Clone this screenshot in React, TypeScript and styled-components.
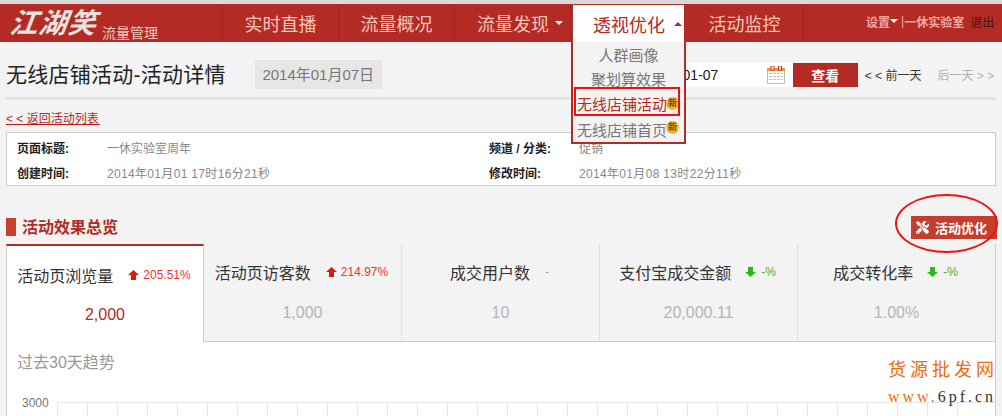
import React from "react";
import styled, { createGlobalStyle } from "styled-components";
import { FaTools } from "react-icons/fa";

const FONT = `"Liberation Sans", "Noto Sans CJK SC", sans-serif`;

const Global = createGlobalStyle`
  html, body { margin: 0; padding: 0; background: #f3f3f3; }
  * { box-sizing: border-box; }
  body { font-family: ${FONT}; }
`;

const Page = styled.div`
  width: 1002px;
  height: 416px;
  overflow: hidden;
  border-top: 4px solid #d9d9d9;
  background: #f3f3f3;
  position: relative;
`;

const Nav = styled.nav`
  display: flex;
  height: 38px;
  background: #b32b24;
`;

const Logo = styled.div`
  width: 223px;
  display: flex;
  align-items: flex-end;
  padding-left: 10px;
  border-right: 1px solid #a02520;
  overflow: hidden;
`;

const LogoMark = styled.span`
  font-size: 28px;
  line-height: 36px;
  font-weight: 700;
  font-style: italic;
  color: #e9e2de;
  letter-spacing: 1px;
  transform: skewX(-8deg);
  display: inline-block;
`;

const LogoSub = styled.span`
  font-size: 14px;
  line-height: 18px;
  color: #eec9c0;
  margin-left: 5px;
  white-space: nowrap;
`;

const NavItem = styled.div<{ $w: number; $active?: boolean; $inset?: number }>`
  position: relative;
  width: ${(p) => p.$w}px;
  height: ${(p) => (p.$active ? 39 : 38)}px;
  margin-top: ${(p) => (p.$active ? -1 : 0)}px;
  padding-left: ${(p) => p.$inset ?? 0}px;
  display: flex;
  align-items: center;
  justify-content: ${(p) => (p.$inset ? "flex-start" : "center")};
  gap: ${(p) => (p.$active ? 9 : 6)}px;
  font-size: 18px;
  color: ${(p) => (p.$active ? "#b32b24" : "#f9c6ba")};
  background: ${(p) => (p.$active ? "#fff" : "transparent")};
  border-right: ${(p) => (p.$active ? "none" : "1px solid #a02520")};
  ${(p) => p.$active && "border: 2px solid #b32b24; border-bottom: none; z-index: 5;"}
`;

const Caret = styled.i<{ $up?: boolean; $color?: string }>`
  width: 0;
  height: 0;
  border-left: 4px solid transparent;
  border-right: 4px solid transparent;
  ${(p) =>
    p.$up
      ? `border-bottom: 4px solid ${p.$color || "#b32b24"};`
      : `border-top: 4px solid ${p.$color || "#fff"};`}
`;

const Menu = styled.div`
  position: absolute;
  left: -2px;
  right: -2px;
  top: 37px;
  height: 102px;
  background: #f3f3f3;
  border: 2px solid #b32b24;
  border-top: none;
  display: flex;
  flex-direction: column;
  align-items: center;
`;

const MenuLink = styled.div`
  height: 24.5px;
  width: 100%;
  display: flex;
  align-items: center;
  justify-content: center;
  font-size: 15px;
  color: #777;
`;

const MenuNew = styled.div<{ $shift: number }>`
  position: relative;
  height: 25px;
  width: 100%;
  margin-top: ${(p) => p.$shift}px;
  padding-left: 4px;
  display: flex;
  align-items: center;
  font-size: 15px;
  color: #777;
`;

const CurrentText = styled.span`
  color: #b32b24;
  border-bottom: 1px solid #b32b24;
  line-height: 18px;
`;

const Highlight = styled.div`
  position: absolute;
  left: 1px;
  top: -6px;
  width: 106px;
  height: 29px;
  border: 2px solid #f01010;
  pointer-events: none;
`;

const Badge = styled.span<{ $top: number }>`
  position: absolute;
  left: 93px;
  top: ${(p) => p.$top}px;
  width: 13px;
  height: 13px;
  border-radius: 50%;
  background: #f2b529;
  color: #7a4a10;
  font-size: 9px;
  line-height: 13px;
  text-align: center;
  font-weight: 700;
`;

const UserBar = styled.div`
  flex: 1;
  display: flex;
  align-items: center;
  padding-left: 62px;
  padding-bottom: 4px;
  font-size: 12px;
  color: #f5a8a0;
  white-space: nowrap;
`;

const UserLink = styled.span`
  font-weight: 700;
`;

const UserSep = styled.span`
  margin: 0 0 0 3px;
`;

const Logout = styled.span`
  color: #3a1a16;
  margin-left: 6px;
`;

const Content = styled.main`
  padding: 0 6px;
`;

const TitleRow = styled.div`
  height: 58px;
  display: flex;
  align-items: center;
  border-bottom: 3px solid #e2e2e2;
  padding-top: 10px;
`;

const Title = styled.h1`
  margin: 0;
  font-size: 21px;
  line-height: 30px;
  font-weight: 400;
  letter-spacing: 0.25px;
  color: #222;
  white-space: nowrap;
`;

const DateChip = styled.div`
  margin-left: 29px;
  width: 127px;
  height: 29px;
  background: #e6e6e6;
  color: #777;
  font-size: 15px;
  line-height: 29px;
  text-align: center;
`;

const DateInput = styled.div`
  margin-left: 260px;
  width: 151px;
  height: 24px;
  background: #fff;
  display: flex;
  align-items: center;
  justify-content: space-between;
  padding: 0 7px 0 5px;
  font-size: 14px;
  color: #222;
`;

const ViewButton = styled.button`
  width: 65px;
  height: 24px;
  border: none;
  padding: 0;
  background: #b32b24;
  color: #fff;
  font: 700 14px ${FONT};
`;

const DayLink = styled.span<{ $muted?: boolean }>`
  font-size: 12px;
  color: ${(p) => (p.$muted ? "#b0b0b0" : "#333")};
  margin-left: ${(p) => (p.$muted ? 16 : 7)}px;
  white-space: nowrap;
`;

const BackLink = styled.a`
  display: block;
  width: 94px;
  margin-top: 12px;
  height: 13px;
  font-size: 12px;
  line-height: 14px;
  color: #b32b24;
  border-bottom: 1px solid #c01616;
  white-space: nowrap;
`;

const InfoBox = styled.section`
  margin-top: 7px;
  width: 990px;
  height: 54px;
  background: #fff;
  border: 1px solid #ccc;
  padding: 2px 0 0 10px;
  display: grid;
  grid-template-columns: 90px 382px 90px 1fr;
  grid-auto-rows: 25px;
  align-items: center;
  font-size: 12px;
`;

const InfoLabel = styled.span`
  color: #222;
  font-weight: 700;
`;

const InfoValue = styled.span<{ $spaced?: boolean }>`
  color: #888;
  letter-spacing: ${(p) => (p.$spaced ? "0.33px" : "0")};
`;

const SectionHead = styled.div`
  position: relative;
  z-index: 3;
  margin-top: 30px;
  height: 23px;
  display: flex;
  align-items: center;
`;

const SectionMark = styled.i`
  width: 10px;
  height: 18px;
  background: #c63f2f;
  margin-right: 6px;
  margin-bottom: 2px;
`;

const SectionTitle = styled.h2`
  margin: 0 0 3px;
  font-size: 16px;
  font-weight: 700;
  color: #b32b24;
`;

const OptimizeButton = styled.button`
  margin-left: auto;
  margin-right: -1px;
  width: 86px;
  height: 23px;
  border: none;
  padding: 0 0 0 5px;
  background: #c43e2e;
  color: #fff;
  font: 700 13px ${FONT};
  display: flex;
  align-items: center;
  gap: 6px;
  white-space: nowrap;
`;

const Ring = styled.div`
  position: absolute;
  left: 889px;
  top: -22px;
  width: 103px;
  height: 59px;
  border: 2px solid #ee1111;
  border-radius: 50%;
  pointer-events: none;
`;

const Panel = styled.section`
  position: relative;
  margin-top: 5px;
  width: 990px;
  height: 172px;
  background: #fff;
  border-left: 1px solid #ccc;
  border-right: 1px solid #ccc;
`;

const TabRow = styled.div`
  display: flex;
  height: 98px;
  margin-left: -1px;
`;

const Tab = styled.div<{ $active?: boolean; $last?: boolean }>`
  width: 198px;
  flex: ${(p) => (p.$last ? 1 : "none")};
  background: ${(p) => (p.$active ? "#fff" : "#f3f3f3")};
  border-top: 2px solid ${(p) => (p.$active ? "#b32b24" : "#f3f3f3")};
  border-bottom: ${(p) => (p.$active ? "none" : "1px solid #ccc")};
  border-left: ${(p) => (p.$active ? "1px solid #ccc" : "none")};
  border-right: ${(p) => (p.$active ? "1px solid #ccc" : p.$last ? "none" : "1px dotted #c8c8c8")};
  padding: ${(p) => (p.$active ? 19 : 16)}px 2px 0 0;
  display: flex;
  flex-direction: column;
  align-items: center;
`;

const TabHead = styled.div`
  display: flex;
  align-items: center;
  height: 20px;
  white-space: nowrap;
`;

const TabLabel = styled.span`
  font-size: 16px;
  color: #333;
`;

const Delta = styled.span<{ $tone: "up" | "down" | "none" }>`
  display: flex;
  align-items: center;
  gap: ${(p) => (p.$tone === "down" ? 5 : 4)}px;
  margin-left: ${(p) => (p.$tone === "down" ? 14 : 15)}px;
  font-size: 12px;
  color: ${(p) => (p.$tone === "up" ? "#ee3333" : p.$tone === "down" ? "#55aa22" : "#aaa")};
`;

const TabValue = styled.div<{ $active?: boolean }>`
  margin-top: ${(p) => (p.$active ? 20 : 21)}px;
  margin-left: 2px;
  font-size: 16px;
  line-height: 20px;
  color: ${(p) => (p.$active ? "#b32b24" : "#b5b5b5")};
`;

const ChartTitle = styled.div`
  padding: 10px 0 0 10px;
  font-size: 16px;
  line-height: 22px;
  color: #999;
`;

const ChartArea = styled.div`
  display: flex;
  margin-top: 28px;
  height: 20px;
`;

const AxisLabel = styled.span`
  width: 50px;
  padding-left: 15px;
  margin-top: -6px;
  font-size: 12px;
  line-height: 14px;
  color: #777;
`;

const Watermark = styled.div`
  position: absolute;
  left: 881px;
  top: 114px;
  width: 108px;
  color: #ef6a10;
  white-space: nowrap;
`;

const WatermarkTitle = styled.div`
  font-size: 18px;
  line-height: 24px;
  letter-spacing: 4px;
`;

const WatermarkUrl = styled.div`
  font-size: 16px;
  line-height: 20px;
  margin-top: 5px;
  letter-spacing: 3px;
  font-family: "Liberation Serif", serif;
`;

const WatermarkDark = styled.span`
  color: #333;
`;

const Arrow = ({ down }: { down?: boolean }) => (
  <svg width="11" height="10" viewBox="0 0 11 10" aria-hidden="true">
    <path
      d={down ? "M3 0h5v5h3L5.5 10 0 5h3z" : "M3 10h5V5h3L5.5 0 0 5h3z"}
      fill={down ? "#2db51d" : "#d81e06"}
    />
  </svg>
);

const CalendarIcon = () => (
  <svg width="19" height="18" viewBox="0 0 19 18" aria-hidden="true">
    <rect x="0.5" y="2.5" width="17" height="15" fill="#fff" stroke="#bbb" />
    <rect x="0" y="2" width="18" height="3" fill="#ee9a2e" />
    <rect x="4" y="0" width="3" height="4" fill="#fff" stroke="#d22" />
    <rect x="11.5" y="0" width="3" height="4" fill="#fff" stroke="#d22" />
    {[7, 10, 13].map((y) => (
      <path key={y} d={`M2 ${y + 0.5}h14`} stroke="#c4c4c4" strokeDasharray="3 1" />
    ))}
  </svg>
);

const tabs = [
  { label: "活动页浏览量", delta: "205.51%", tone: "up", value: "2,000", active: true },
  { label: "活动页访客数", delta: "214.97%", tone: "up", value: "1,000" },
  { label: "成交用户数", delta: "-", tone: "none", value: "10" },
  { label: "支付宝成交金额", delta: "-%", tone: "down", value: "20,000.11" },
  { label: "成交转化率", delta: "-%", tone: "down", value: "1.00%" },
] as const;

export default function App() {
  return (
    <Page>
      <Global />
      <Nav>
        <Logo>
          <LogoMark>江湖笑</LogoMark>
          <LogoSub>流量管理</LogoSub>
        </Logo>
        <NavItem $w={116}>实时直播</NavItem>
        <NavItem $w={116}>流量概况</NavItem>
        <NavItem $w={116} $inset={22}>
          流量发现
          <Caret />
        </NavItem>
        <NavItem $w={115} $active $inset={20}>
          透视优化
          <Caret $up />
          <Menu>
            <MenuLink>人群画像</MenuLink>
            <MenuLink>聚划算效果</MenuLink>
            <MenuNew $shift={2}>
              <CurrentText>无线店铺活动</CurrentText>
              <Badge $top={4}>新</Badge>
              <Highlight />
            </MenuNew>
            <MenuNew $shift={-1}>
              无线店铺首页
              <Badge $top={4}>新</Badge>
            </MenuNew>
          </Menu>
        </NavItem>
        <NavItem $w={118}>活动监控</NavItem>
        <UserBar>
          <UserLink>设置</UserLink>
          <Caret />
          <UserSep>|</UserSep>
          <UserLink>一休实验室</UserLink>
          <Logout>退出</Logout>
        </UserBar>
      </Nav>
      <Content>
        <TitleRow>
          <Title>无线店铺活动-活动详情</Title>
          <DateChip>2014年01月07日</DateChip>
          <DateInput>
            2014-01-07
            <CalendarIcon />
          </DateInput>
          <ViewButton>查看</ViewButton>
          <DayLink>&lt; &lt; 前一天</DayLink>
          <DayLink $muted>后一天 &gt; &gt;</DayLink>
        </TitleRow>
        <BackLink>&lt; &lt; 返回活动列表</BackLink>
        <InfoBox>
          <InfoLabel>页面标题:</InfoLabel>
          <InfoValue>一休实验室周年</InfoValue>
          <InfoLabel>频道 / 分类:</InfoLabel>
          <InfoValue>促销</InfoValue>
          <InfoLabel>创建时间:</InfoLabel>
          <InfoValue $spaced>2014年01月01 17时16分21秒</InfoValue>
          <InfoLabel>修改时间:</InfoLabel>
          <InfoValue $spaced>2014年01月08 13时22分11秒</InfoValue>
        </InfoBox>
        <SectionHead>
          <SectionMark />
          <SectionTitle>活动效果总览</SectionTitle>
          <OptimizeButton>
            <FaTools size={13} />
            活动优化
          </OptimizeButton>
          <Ring />
        </SectionHead>
        <Panel>
          <TabRow>
            {tabs.map((t, i) => (
              <Tab key={t.label} $active={"active" in t} $last={i === tabs.length - 1}>
                <TabHead>
                  <TabLabel>{t.label}</TabLabel>
                  <Delta $tone={t.tone}>
                    {t.tone !== "none" && <Arrow down={t.tone === "down"} />}
                    {t.delta}
                  </Delta>
                </TabHead>
                <TabValue $active={"active" in t}>{t.value}</TabValue>
              </Tab>
            ))}
          </TabRow>
          <ChartTitle>过去30天趋势</ChartTitle>
          <ChartArea>
            <AxisLabel>3000</AxisLabel>
            <svg width="938" height="20" aria-hidden="true">
              <path d="M0 0.5H938" stroke="#e6e6e6" />
              {Array.from({ length: 31 }, (_, i) => (
                <path key={i} d={`M${0.5 + i * 30} 0V20`} stroke="#e6e6e6" />
              ))}
            </svg>
          </ChartArea>
          <Watermark>
            <WatermarkTitle>货源批发网</WatermarkTitle>
            <WatermarkUrl>
              www.<WatermarkDark>6pf.cn</WatermarkDark>
            </WatermarkUrl>
          </Watermark>
        </Panel>
      </Content>
    </Page>
  );
}
